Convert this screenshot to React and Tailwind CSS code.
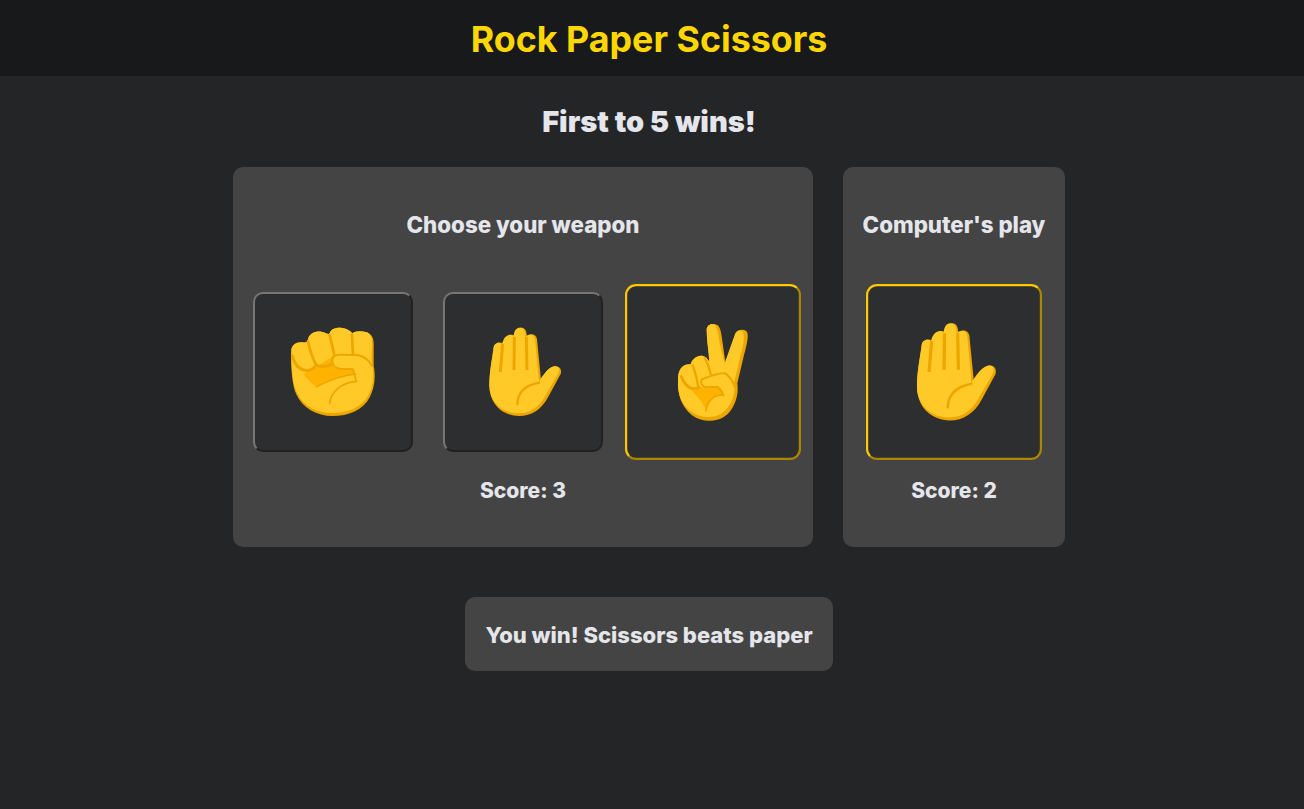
import React from "react";

const SKIN = "#ffca28";
const EDGE = "#eda600";
const SHADE = "#ffb300";

function RockIcon() {
  return (
    <svg width="100" height="100" viewBox="114 126 300 300">
      <path fill={EDGE} d="M139 212C139 195 155 185 172 187C180 188 186 190 189 178C194 158 215 152 232 156C243 158 250 165 254 160C258 146 275 142 292 144C306 146 316 152 322 160C330 152 350 152 365 157C380 162 386 175 386 190L386 258C392 285 390 320 375 350C355 390 310 408 262 408C215 408 175 385 155 345C140 315 138 260 139 212Z" />
      <path fill={SKIN} d="M139 212C139 195 155 185 172 187C180 188 186 190 189 178C194 158 215 152 232 156C243 158 250 165 254 160C258 146 275 142 292 144C306 146 316 152 322 160C330 152 350 152 365 157C376 161 381 172 381 188L379 240C388 280 386 318 370 345C350 383 308 399 262 399C215 399 178 380 158 342C142 312 138 260 139 212Z" />
      <path fill={SHADE} d="M205 262C222 262 240 240 262 232L268 264L322 268L330 282C290 288 250 305 214 320C200 310 185 295 176 282Z" />
      <path fill="none" stroke={EDGE} strokeWidth="9" strokeLinecap="round" d="M142 228C150 258 170 278 195 270C205 266 210 262 214 255C225 262 238 262 258 254" />
      <path fill="none" stroke={EDGE} strokeWidth="8" strokeLinecap="round" d="M189 184C193 205 203 235 213 254M254 165C258 185 264 205 268 226M321 164C322 180 322 200 324 222" />
      <path fill={SKIN} d="M262 242C260 230 272 224 284 224L338 226C360 228 376 245 381 270C386 300 380 325 365 345L336 308C335 295 331 282 325 266L284 264C270 264 263 254 262 242Z" />
      <path fill="none" stroke={EDGE} strokeWidth="6" strokeLinecap="round" strokeLinejoin="round" d="M324 268L284 266C270 264 262 254 262 242C260 230 272 224 284 224L336 225C356 228 372 240 381 258" />
      <path fill="none" stroke={EDGE} strokeWidth="5" strokeLinecap="round" d="M214 320C250 302 295 286 332 282M254 370C258 335 290 308 334 304L325 270" />
    </svg>
  );
}

function PaperIcon() {
  return (
    <svg width="100" height="100" viewBox="114 126 300 300">
      <path fill={EDGE} d="M176 202C178 186 204 182 207 196C209 160 240 158 243 172C243 150 250 143 258 143C270 143 275 150 276 172C282 158 304 160 306 178L318 300C326 285 340 262 358 259C372 256 382 268 377 282L340 350C320 388 290 408 252 408C205 408 163 375 163 315C163 275 172 235 176 202Z" />
      <path fill={SKIN} d="M176 202C178 186 200 184 201 196C205 160 234 158 236 172C236 150 245 143 255 143C265 143 270 150 272 172C277 160 298 160 300 178L312 305C322 288 338 264 356 259C370 256 376 266 371 278L332 346C312 382 286 400 250 400C205 400 163 370 163 315C163 275 172 235 176 202Z" />
      <path fill="none" stroke={EDGE} strokeWidth="9" d="M203 192L196 276M238 170L237 270M274 170L276 270" />
      <path fill="none" stroke={EDGE} strokeWidth="7" strokeLinecap="round" d="M247 372C248 335 270 316 312 308" />
    </svg>
  );
}

function ScissorsIcon() {
  return (
    <svg width="100" height="100" viewBox="114 111 330 330">
      <path fill={EDGE} d="M260 150C260 134 280 127 292 135C302 142 304 160 308 190L316 246L348 165C352 150 374 142 382 158C386 170 380 195 372 225L352 310C358 350 340 395 310 412C285 428 240 425 215 405C185 380 172 345 174 300C174 270 185 252 212 253C218 232 240 220 258 232L268 245C266 210 260 180 260 150Z" />
      <path fill={SKIN} d="M260 150C260 134 276 127 284 135C292 142 295 160 299 190L314 250L344 165C348 150 364 146 370 158C374 170 370 195 362 225L342 310C348 350 330 385 302 402C280 416 240 414 215 396C185 375 172 345 174 300C174 270 185 252 212 253C218 232 240 220 258 232L268 245C266 210 260 180 260 150Z" />
      <path fill={SHADE} d="M205 318C225 330 240 322 250 322L296 322L310 346C285 345 265 360 258 392C250 365 225 345 205 318Z" />
      <path fill="none" stroke={EDGE} strokeWidth="9" strokeLinecap="round" d="M184 290C195 318 215 335 238 322" />
      <path fill="none" stroke={EDGE} strokeWidth="7" strokeLinecap="round" d="M234 318C232 300 226 278 218 256M254 234C262 247 268 262 272 282" />
      <path fill={SKIN} d="M246 300C258 292 295 278 318 280C335 292 343 310 345 330L312 345C306 335 298 325 292 318L258 322C245 320 240 308 246 300Z" />
      <path fill="none" stroke={EDGE} strokeWidth="6" strokeLinecap="round" strokeLinejoin="round" d="M246 298C265 290 295 278 316 280C332 292 342 310 346 326M292 320L258 322C245 320 240 308 246 298M292 320C300 326 306 335 310 346" />
      <path fill="none" stroke={EDGE} strokeWidth="5" strokeLinecap="round" d="M258 392C262 365 280 342 310 346" />
    </svg>
  );
}

function Choice({ children, selected }) {
  return (
    <button
      className={
        selected
          ? "flex h-40 w-40 scale-110 items-center justify-center rounded-[10px] border-2 border-[#ffc800] bg-[#2d2e30] [border-style:outset]"
          : "flex h-40 w-40 items-center justify-center rounded-[10px] border-2 border-[#767676] bg-[#2d2e30] [border-style:outset]"
      }
    >
      {children}
    </button>
  );
}

function Panel({ title, score, width, children }) {
  return (
    <div className={`flex h-[380px] ${width} flex-col items-center rounded-[10px] bg-[#444444] pt-[37px]`}>
      <h3 className="text-[22.3px] leading-[42px] font-extrabold whitespace-nowrap">{title}</h3>
      <div className="mt-[46px] flex gap-[30px]">{children}</div>
      <p className="mt-[18px] text-[21px] leading-[42px] font-extrabold">{score}</p>
    </div>
  );
}

export default function App() {
  return (
    <div className="min-h-[809px] bg-[#242527] font-['Inter',sans-serif] text-[#e4e6eb]">
      <header className="flex h-[76px] items-center justify-center bg-[#18191b] pt-1 pr-1.5">
        <h1 className="text-[35.8px] font-bold text-[#ffd700]">Rock Paper Scissors</h1>
      </header>
      <main className="flex flex-col items-center pt-[26px] pr-1.5">
        <h2 className="text-[29px] leading-10 font-black">First to 5 wins!</h2>
        <div className="mt-[25px] flex gap-[30px]">
          <Panel title="Choose your weapon" score="Score: 3" width="w-[580px]">
            <Choice><RockIcon /></Choice>
            <Choice><PaperIcon /></Choice>
            <Choice selected><ScissorsIcon /></Choice>
          </Panel>
          <Panel title="Computer's play" score="Score: 2" width="w-[222px]">
            <Choice selected><PaperIcon /></Choice>
          </Panel>
        </div>
        <div className="mt-[50px] flex h-[74px] w-[368px] items-center justify-center rounded-[10px] bg-[#444444] pt-0.5 text-[22px] font-extrabold">
          You win! Scissors beats paper
        </div>
      </main>
    </div>
  );
}
